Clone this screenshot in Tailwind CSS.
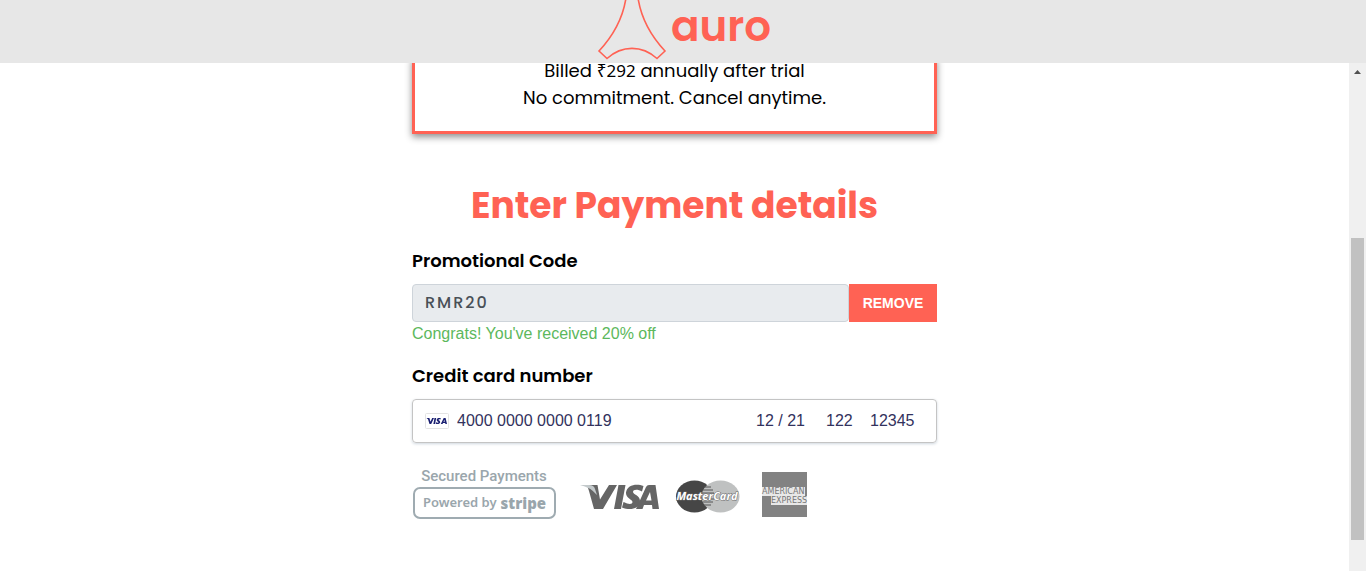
<!DOCTYPE html>
<html lang="en">
<head>
<meta charset="utf-8">
<meta name="viewport" content="width=device-width, initial-scale=1">
<title>auro – Payment details</title>
<script src="https://cdn.jsdelivr.net/npm/@tailwindcss/browser@4"></script>
</head>
<body class="flex h-screen flex-col overflow-hidden bg-white font-[Poppins,Inter,sans-serif] text-black [font-feature-settings:'cv11']">
<header class="relative z-10 flex h-[63px] shrink-0 justify-center bg-[#e7e7e7]">
  <a href="#" aria-label="auro home" class="flex items-start gap-1 pl-[2px] text-[#ff6254]">
    <svg class="h-[63px] w-[70px]" viewBox="0 0 70 63" fill="none" stroke="currentColor" stroke-width="1.6" aria-hidden="true">
      <path d="M29.500 -6C27 17 16 36 2 51L10 58.500C25 45 45 45 60 58.500L68 51C54 36 43 17 40.500 -6"/>
    </svg>
    <span class="text-[42px] leading-[54px] font-semibold">auro</span>
  </a>
</header>
<div class="flex min-h-0 flex-1">
  <main class="flex min-w-0 flex-1 flex-col items-center">
    <div class="w-full max-w-[525px]">
      <section class="-mt-[6px] border-[3px] border-t-0 border-[#ff6254] pb-5 text-center text-[18px] leading-[27px] shadow-[0_3px_7px_rgba(0,0,0,0.45)]">
        <p>Billed <span class="font-['Noto_Sans',sans-serif] text-[17px] leading-none">₹292</span> annually after trial</p>
        <p>No commitment. Cancel anytime.</p>
      </section>
      <h1 class="mt-[43px] text-center text-[36px] leading-[57px] font-bold whitespace-nowrap text-[#ff6254]">Enter Payment details</h1>
      <form class="mt-[13px]">
        <label for="promo" class="block text-[18px] leading-[27px] font-semibold">Promotional Code</label>
        <div class="mt-[10px] flex h-[38px]">
          <input id="promo" value="RMR20" readonly class="min-w-0 flex-1 rounded-[4px] border border-[#ced4da] bg-[#e8ebee] px-3 text-[16px] font-medium tracking-[2px] text-[#495057]">
          <button type="button" class="w-[88px] bg-[#ff6254] font-['Liberation_Sans',Arial,sans-serif] text-[14px] font-bold text-white">REMOVE</button>
        </div>
        <p class="font-['Liberation_Sans',Arial,sans-serif] text-[16px] leading-6 text-[#5cb85c]">Congrats! You've received 20% off</p>
        <label for="card" class="mt-4 block text-[18px] leading-[27px] font-semibold">Credit card number</label>
        <div class="mt-[10px] flex h-11 items-center rounded-[4px] border border-[#c4c4c4] pr-[14px] pl-3 font-['Liberation_Sans',Arial,sans-serif] text-[16px] text-[#32325d] shadow-[0_1px_3px_#cfd7df]">
          <svg class="mr-2 mb-px h-4 w-6 shrink-0" viewBox="0 0 24 16" aria-hidden="true">
            <rect x=".5" y=".5" width="23" height="15" rx="1" fill="#fff" stroke="#e3e3e3"/>
            <g fill="#1a1f71"><path d="M1.500 5H4.400L5.500 8.800L7.200 5H9L6.200 11H4.500L3 6.200Z"/><path d="M9.500 5H11.200L10.100 11H8.400Z"/><path d="M15.800 5.200L15.500 6.500C14.600 6 13.500 6.100 13.500 6.700C13.500 7.300 15.200 7.600 15.200 9C15.200 10.900 12.600 11.500 10.700 10.700L11 9.300C12.300 10 13.400 9.900 13.400 9.200C13.400 8.500 11.700 8.300 11.700 6.900C11.700 5 13.900 4.500 15.800 5.200Z"/><path fill-rule="evenodd" d="M18.700 5H20.600L22 11H20.400L20.200 10H18L17.600 11H15.800ZM19.300 6.700L18.500 8.800H19.800Z"/></g>
          </svg>
          <input id="card" value="4000 0000 0000 0119" class="min-w-0 flex-1">
          <input aria-label="Expiry date" value="12 / 21" class="w-[70px]">
          <input aria-label="CVC" value="122" class="w-[44px]">
          <input aria-label="ZIP code" value="12345" class="w-[52px]">
        </div>
      </form>
      <div class="mt-6 flex items-start">
        <div class="w-36 text-[#9aa6ac]">
          <p class="text-center font-[Roboto,sans-serif] text-[15px] leading-[18px] font-medium">Secured Payments</p>
          <div class="mt-[2px] ml-px flex h-8 items-center justify-center gap-1 rounded-[7px] border-2 border-[#9fabb1] font-['Noto_Sans',sans-serif] text-[13px] font-semibold whitespace-nowrap">
            <span>Powered by</span><b class="text-[15px]">stripe</b>
          </div>
        </div>
        <svg class="ml-6 h-[64px] w-[265px]" viewBox="0 0 265 64" role="img" aria-label="Visa, MasterCard, American Express">
          <g fill="#656565">
            <path d="M7 18H17.500L20 32.500L29 18H37L23 42H14L9 24Z"/>
            <path fill="#c3c9cb" d="M0 18H9Q14 18 15 22L17 28Q10 20 0 18Z"/>
            <path d="M38.500 18H45.500L41 42H34Z"/>
            <path d="M63.500 19L62 24.500C57.500 22 53 22.500 53 25C53 27.500 60.500 28.500 60 34.500C59 42.500 49.500 43.500 42 40.500L43.500 35C49 37.800 52.500 37.300 52.500 35C52.500 32.500 45.500 31.500 46 25.500C47 17.500 57 16.300 63.500 19Z"/>
            <path fill-rule="evenodd" d="M69 18H75.500L79 42H72.500L72 38H64L62.500 42H56L66 20Q67 18 69 18ZM70 25L66 33.500H71.500Z"/>
          </g>
          <ellipse cx="114.500" cy="29.500" rx="18.500" ry="16" fill="#464646"/>
          <ellipse cx="140.500" cy="29.500" rx="19" ry="16" fill="#bfc1c1"/>
          <path d="M124 20H131M123 23H133M122 26H134M122 32H134M123 35H133M124 38H131" stroke="#555" stroke-width="1"/>
          <text x="127" y="33" text-anchor="middle" font-family="Open Sans, sans-serif" font-size="11" font-style="italic" font-weight="700" fill="#fff" stroke="#666" stroke-width="1" paint-order="stroke">MasterCard</text>
          <rect x="182" y="5" width="45" height="45" fill="#828282"/>
          <rect x="182" y="20" width="43" height="9" fill="#e8e8e8"/>
          <rect x="191" y="29" width="36" height="9" fill="#e8e8e8"/>
          <g fill="#777" font-family="DejaVu Sans, sans-serif" font-size="8">
            <text x="182" y="27">AMERICAN</text>
            <text x="191" y="36">EXPRESS</text>
          </g>
        </svg>
      </div>
    </div>
  </main>
  <div class="flex w-[17px] shrink-0 flex-col items-center bg-[#f0f0f0]" aria-hidden="true">
    <svg class="mt-[7px] h-1 w-[7px]" viewBox="0 0 7 4" fill="#505050"><path d="M3.500 0L7 4H0Z"/></svg>
    <div class="mt-[164px] h-[302px] w-[13px] bg-[#c1c1c1]"></div>
  </div>
</div>
</body>
</html>
